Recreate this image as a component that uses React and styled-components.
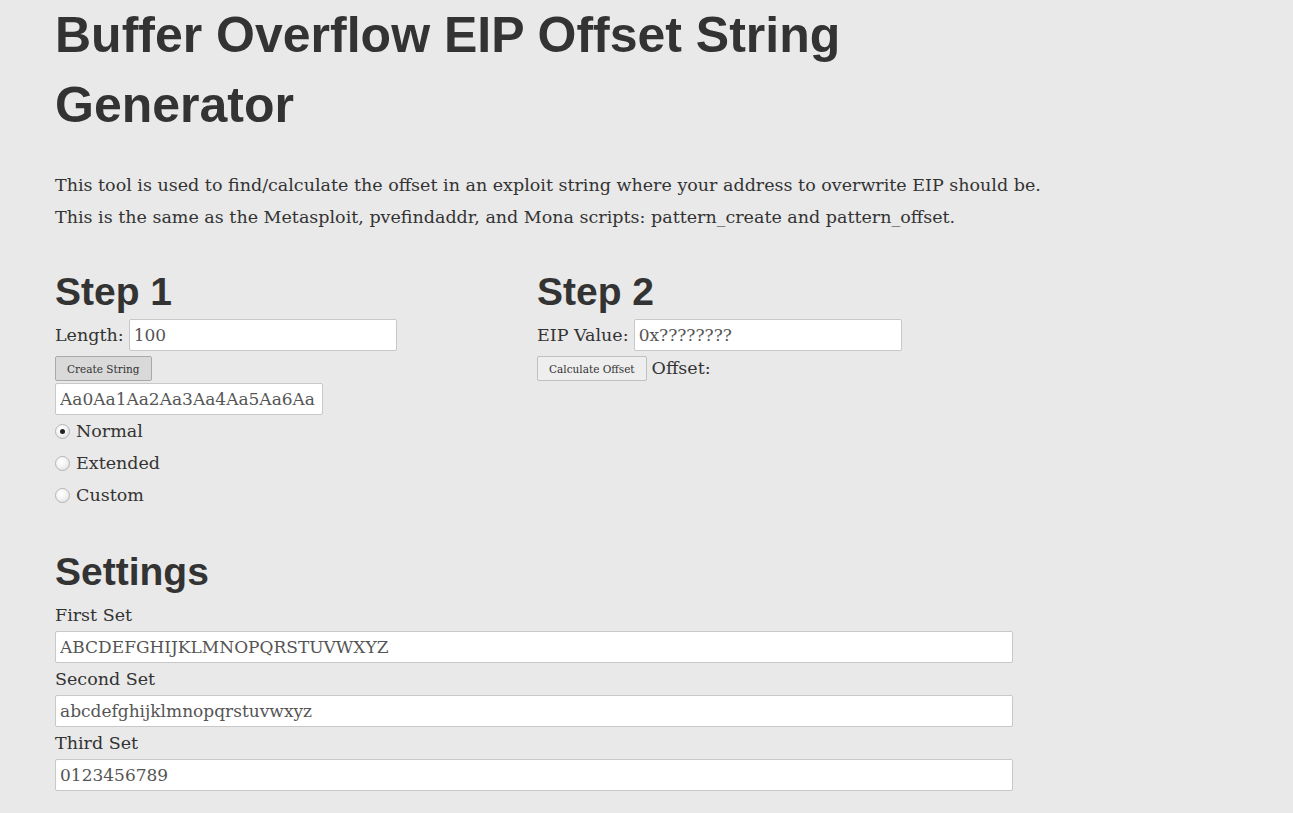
import React, { useState } from 'react';
import styled, { createGlobalStyle } from 'styled-components';

const GlobalStyle = createGlobalStyle`
    html, body {
        margin: 0;
        padding: 0;
        background: #e9e9e9;
    }
    body {
        font-family: 'DejaVu Serif', 'Liberation Serif', serif;
        font-size: 17.5px;
        color: #333;
    }
`;

const Page = styled.div`
    width: 1000px;
    padding: 0 0 20px 55px;
`;

const Title = styled.h1`
    margin: 0;
    max-width: 958px;
    font-family: 'Liberation Sans', Arial, sans-serif;
    font-weight: 700;
    font-size: 50px;
    line-height: 70px;
    color: #333;
`;

const Intro = styled.p`
    margin: 29px 0 0;
    line-height: 32px;
`;

const Steps = styled.div`
    display: grid;
    grid-template-columns: 482px 1fr;
    margin-top: 38px;
`;

const Heading = styled.h2`
    margin: 0 0 6px;
    font-family: 'Liberation Sans', Arial, sans-serif;
    font-weight: 700;
    font-size: 39px;
    line-height: 42px;
    color: #333;
`;

const SettingsHeading = styled(Heading)`
    margin-top: 40px;
`;

const Row = styled.div`
    display: flex;
    align-items: center;
    gap: 5px;
    height: 32px;
`;

const TextInput = styled.input`
    box-sizing: border-box;
    width: ${(p) => p.$width || 268}px;
    height: 32px;
    margin: 0;
    padding: 0 4px;
    border: 1px solid #c8c8c8;
    border-radius: 2px;
    background: #fff;
    font-family: 'DejaVu Serif', 'Liberation Serif', serif;
    font-size: 17px;
    color: #555;
    outline: none;
`;

const Button = styled.button`
    box-sizing: border-box;
    height: 25px;
    margin: 0;
    padding: 0 11px;
    border: 1px solid ${(p) => (p.$pressed ? '#a9a9a9' : '#c0c0c0')};
    border-radius: 2px;
    background: ${(p) => (p.$pressed ? '#d9d9d9' : '#eeeeee')};
    font-family: 'DejaVu Serif', 'Liberation Serif', serif;
    font-size: 10.5px;
    color: #333;
    cursor: pointer;
`;

const ButtonRow = styled.div`
    display: flex;
    align-items: center;
    gap: 5px;
    margin-top: 5px;
    line-height: 25px;
`;

const Output = styled(TextInput)`
    display: block;
    margin-top: 2px;
`;

const RadioLabel = styled.label`
    display: flex;
    align-items: center;
    gap: 6px;
    height: 32px;
    cursor: pointer;
`;

const Radio = styled.input`
    appearance: none;
    box-sizing: border-box;
    width: 15px;
    height: 15px;
    margin: 0;
    border: 1px solid #b5b5b5;
    border-radius: 50%;
    background: radial-gradient(circle at 40% 35%, #ffffff 0%, #f4f4f4 45%, #d6d6d6 100%);
    display: grid;
    place-items: center;

    &:checked::after {
        content: '';
        width: 5px;
        height: 5px;
        border-radius: 50%;
        background: #222;
    }
`;

const FieldLabel = styled.div`
    line-height: 32px;
`;

const Field = styled.div``;

const modes = ['Normal', 'Extended', 'Custom'];

const sets = [
    { label: 'First Set', value: 'ABCDEFGHIJKLMNOPQRSTUVWXYZ' },
    { label: 'Second Set', value: 'abcdefghijklmnopqrstuvwxyz' },
    { label: 'Third Set', value: '0123456789' },
];

export default function App() {
    const [mode, setMode] = useState('Normal');

    return (
        <>
            <GlobalStyle />
            <Page>
                <Title>Buffer Overflow EIP Offset String Generator</Title>
                <Intro>
                    This tool is used to find/calculate the offset in an exploit string where your
                    address to overwrite EIP should be.
                    <br />
                    This is the same as the Metasploit, pvefindaddr, and Mona scripts: pattern_create
                    and pattern_offset.
                </Intro>

                <Steps>
                    <div>
                        <Heading>Step 1</Heading>
                        <Row>
                            <span>Length:</span>
                            <TextInput defaultValue="100" />
                        </Row>
                        <ButtonRow>
                            <Button $pressed>Create String</Button>
                        </ButtonRow>
                        <Output readOnly value="Aa0Aa1Aa2Aa3Aa4Aa5Aa6Aa" />
                        {modes.map((m) => (
                            <RadioLabel key={m}>
                                <Radio
                                    type="radio"
                                    name="mode"
                                    checked={mode === m}
                                    onChange={() => setMode(m)}
                                />
                                {m}
                            </RadioLabel>
                        ))}
                    </div>
                    <div>
                        <Heading>Step 2</Heading>
                        <Row>
                            <span>EIP Value:</span>
                            <TextInput defaultValue="0x????????" />
                        </Row>
                        <ButtonRow>
                            <Button>Calculate Offset</Button>
                            <span>Offset:</span>
                        </ButtonRow>
                    </div>
                </Steps>

                <SettingsHeading>Settings</SettingsHeading>
                {sets.map((s) => (
                    <Field key={s.label}>
                        <FieldLabel>{s.label}</FieldLabel>
                        <TextInput $width={958} defaultValue={s.value} />
                    </Field>
                ))}
            </Page>
        </>
    );
}
